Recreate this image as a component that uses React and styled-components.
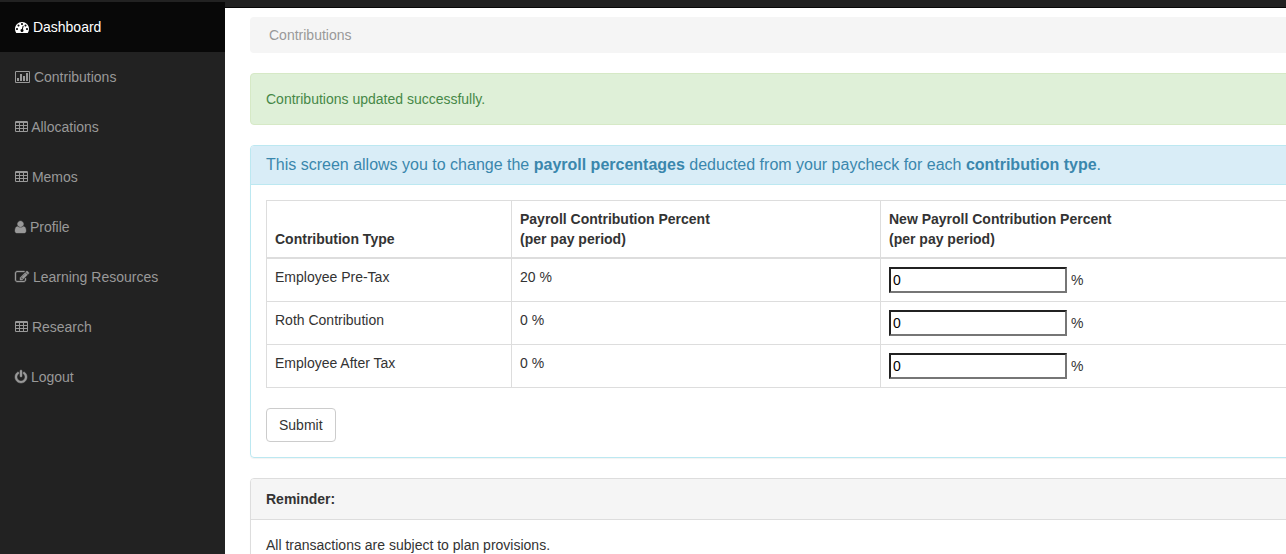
import React from 'react';
import styled, { createGlobalStyle } from 'styled-components';

const GlobalStyle = createGlobalStyle`
  *, *::before, *::after { box-sizing: border-box; }
  html, body { margin: 0; padding: 0; height: 554px; overflow: hidden; }
  body {
    font-family: "Liberation Sans", Arial, sans-serif;
    font-size: 14px;
    line-height: 20px;
    color: #333;
    background: #fff;
  }
`;

const Page = styled.div`
  display: grid;
  grid-template-columns: 225px minmax(0, 1fr);
  height: 554px;
  overflow: hidden;
`;

const Sidebar = styled.nav`
  background: #222;
  padding-top: 2px;
`;

const NavList = styled.ul`
  list-style: none;
  margin: 0;
  padding: 0;
`;

const NavLink = styled.a`
  display: block;
  height: 50px;
  padding: 15px;
  color: ${(p) => (p.$active ? '#fff' : '#999')};
  background: ${(p) => (p.$active ? '#080808' : 'transparent')};
  text-decoration: none;
  white-space: nowrap;
`;

const Glyph = styled.svg`
  height: 14px;
  width: ${(p) => p.$width}px;
  vertical-align: -2px;
  overflow: visible;
  fill: currentColor;
  stroke: currentColor;
  stroke-width: ${(p) => p.$weight || 0};
`;

const Content = styled.div`
  overflow: hidden;
`;

const TopBar = styled.div`
  height: 8px;
  background: #222;
  border-bottom: 1px solid #080808;
`;

const Main = styled.main`
  width: 1150px;
  padding: 9px 25px 0;
`;

const Breadcrumb = styled.div`
  height: 36px;
  padding: 8px 19px;
  margin-bottom: 20px;
  border-radius: 4px;
  background: #f5f5f5;
  color: #999;
`;

const Alert = styled.div`
  padding: 15px;
  margin-bottom: 20px;
  border: 1px solid #d6e9c6;
  border-radius: 4px;
  background: #dff0d8;
  color: #468847;
`;

const Panel = styled.section`
  margin-bottom: 20px;
  border: 1px solid ${(p) => (p.$info ? '#bce8f1' : '#ddd')};
  border-radius: 4px;
  box-shadow: 0 1px 1px rgba(0, 0, 0, 0.05);
`;

const PanelHeading = styled.header`
  padding: 10px 15px;
  border-bottom: 1px solid ${(p) => (p.$info ? '#bce8f1' : '#ddd')};
  border-radius: 3px 3px 0 0;
  background: ${(p) => (p.$info ? '#d9edf7' : '#f5f5f5')};
  color: ${(p) => (p.$info ? '#3a87ad' : '#333')};
`;

const PanelTitle = styled.h3`
  margin: 0;
  font-size: 16px;
  font-weight: 400;
  line-height: 17.6px;
`;

const PanelBody = styled.div`
  padding: 15px;
`;

const Table = styled.table`
  width: 100%;
  margin-bottom: 20px;
  table-layout: fixed;
  border-collapse: collapse;
  border: 1px solid #ddd;
`;

const Column = styled.col`
  width: ${(p) => p.$width || 'auto'};
`;

const HeadCell = styled.th`
  padding: 8px;
  text-align: left;
  vertical-align: bottom;
  border: 1px solid #ddd;
  border-bottom-width: 2px;
`;

const Cell = styled.td`
  padding: 8px;
  vertical-align: top;
  border: 1px solid #ddd;
`;

const PercentInput = styled.input`
  width: 178px;
  height: 26px;
  margin: 0;
  padding: 1px 2px;
  border: 2px solid;
  border-color: #212121 #767676 #767676 #212121;
  background: #fff;
  color: #000;
  font: inherit;
  vertical-align: baseline;
`;

const SubmitButton = styled.button`
  display: block;
  height: 34px;
  padding: 6px 12px;
  border: 1px solid #ccc;
  border-radius: 4px;
  background: #fff;
  color: #333;
  font: inherit;
`;

const dot = 'q0 -53 -37.5 -90.5t-90.5 -37.5t-90.5 37.5t-37.5 90.5t37.5 90.5t90.5 37.5t90.5 -37.5t37.5 -90.5z';
const slot = 'v192q0 14 -9 23t-23 9h-320q-14 0 -23 -9t-9 -23v-192q0 -14 9 -23t23 -9h320q14 0 23 9t9 23z';
const tableSlots = [512, 1024, 1536]
  .map((x) => [160, 544, 928].map((y) => `M${x} ${y}${slot}`).join(''))
  .join('');

// Outlines use a y-up em of 1792 units with the baseline at 0.
const icons = {
  dashboard: {
    units: 1792,
    d: `M384 384${dot}M576 832${dot}M1004 351l101 382q6 26 -7.5 48.5t-38.5 29.5t-48 -6.5t-30 -39.5l-101 -382q-60 -5 -107 -43.5t-63 -98.5q-20 -77 20 -146t117 -89t146 20t89 117q16 60 -6 117t-72 91zM1664 384${dot}M1024 1024${dot}M1472 832${dot}M1792 384q0 -261 -141 -483q-19 -29 -54 -29h-1402q-35 0 -54 29q-141 221 -141 483q0 182 71 348t191 286t286 191t348 71t348 -71t286 -191t191 -286t71 -348z`,
  },
  chart: {
    units: 1920,
    d: 'M512 512v-384h-256v384h256zM896 1024v-896h-256v896h256zM1280 768v-640h-256v640h256zM1664 1152v-1024h-256v1024h256zM1792 32v1216q0 13 -9.5 22.5t-22.5 9.5h-1600q-13 0 -22.5 -9.5t-9.5 -22.5v-1216q0 -13 9.5 -22.5t22.5 -9.5h1600q13 0 22.5 9.5t9.5 22.5zM1920 1248v-1216q0 -66 -47 -113t-113 -47h-1600q-66 0 -113 47t-47 113v1216q0 66 47 113t113 47h1600q66 0 113 -47t47 -113z',
  },
  table: {
    units: 1664,
    d: `${tableSlots}M1664 1248v-1088q0 -66 -47 -113t-113 -47h-1344q-66 0 -113 47t-47 113v1088q0 66 47 113t113 47h1344q66 0 113 -47t47 -113z`,
  },
  user: {
    units: 1408,
    weight: 50,
    d: 'M1408 131q0 -120 -73 -189.5t-194 -69.5h-874q-121 0 -194 69.5t-73 189.5q0 53 3.5 103.5t14 109t26.5 108.5t43 97.5t62 81t85.5 53.5t111.5 20q9 0 42 -21.5t74.5 -48t108 -48t133.5 -21.5t133.5 21.5t108 48t74.5 48t42 21.5q61 0 111.5 -20t85.5 -53.5t62 -81t43 -97.5t26.5 -108.5t14 -109t3.5 -103.5zM1088 1024q0 -159 -112.5 -271.5t-271.5 -112.5t-271.5 112.5t-112.5 271.5t112.5 271.5t271.5 112.5t271.5 -112.5t112.5 -271.5z',
  },
  edit: {
    units: 1792,
    weight: 50,
    d: 'M888 352l116 116l-152 152l-116 -116v-56h96v-96h56zM1328 1072q-16 16 -33 -1l-350 -350q-17 -17 -1 -33t33 1l350 350q17 17 1 33zM1408 478v-190q0 -119 -84.5 -203.5t-203.5 -84.5h-832q-119 0 -203.5 84.5t-84.5 203.5v832q0 119 84.5 203.5t203.5 84.5h832q63 0 117 -25q15 -7 18 -23q3 -17 -9 -29l-49 -49q-14 -14 -32 -8q-23 6 -45 6h-832q-66 0 -113 -47t-47 -113v-832q0 -66 47 -113t113 -47h832q66 0 113 47t47 113v126q0 13 9 22l64 64q15 15 35 7t20 -29zM1312 1216l288 -288l-672 -672h-288v288zM1756 1084l-92 -92l-288 288l92 92q28 28 68 28t68 -28l152 -152q28 -28 28 -68t-28 -68z',
  },
  power: {
    units: 1536,
    weight: 60,
    d: 'M1536 640q0 -156 -61 -298t-164 -245t-245 -164t-298 -61t-298 61t-245 164t-164 245t-61 298q0 182 80.5 343t226.5 270q43 32 95.5 25t83.5 -50q32 -42 24.5 -94.5t-49.5 -84.5q-98 -74 -151.5 -181t-53.5 -228q0 -104 40.5 -198.5t109.5 -163.5t163.5 -109.5t198.5 -40.5t198.5 40.5t163.5 109.5t109.5 163.5t40.5 198.5q0 121 -53.5 228t-151.5 181q-42 32 -49.5 84.5t24.5 94.5q31 43 84 50t95 -25q146 -109 226.5 -270t80.5 -343zM896 1408v-640q0 -52 -38 -90t-90 -38t-90 38t-38 90v640q0 52 38 90t90 38t90 -38t38 -90z',
  },
};

function Icon({ name }) {
  const { units, weight, d } = icons[name];
  return (
    <Glyph $width={units / 128} $weight={weight} viewBox={`0 0 ${units} 1792`} aria-hidden="true">
      <path d={d} fillRule="evenodd" transform="translate(0 1536) scale(1 -1)" />
    </Glyph>
  );
}

const navItems = [
  { icon: 'dashboard', label: 'Dashboard', active: true },
  { icon: 'chart', label: 'Contributions' },
  { icon: 'table', label: 'Allocations' },
  { icon: 'table', label: 'Memos' },
  { icon: 'user', label: 'Profile' },
  { icon: 'edit', label: 'Learning Resources' },
  { icon: 'table', label: 'Research' },
  { icon: 'power', label: 'Logout' },
];

const contributions = [
  { type: 'Employee Pre-Tax', percent: 20 },
  { type: 'Roth Contribution', percent: 0 },
  { type: 'Employee After Tax', percent: 0 },
];

export default function App() {
  return (
    <>
      <GlobalStyle />
      <Page>
        <Sidebar>
          <NavList>
            {navItems.map((item) => (
              <li key={item.label}>
                <NavLink href="#" $active={item.active}>
                  <Icon name={item.icon} /> {item.label}
                </NavLink>
              </li>
            ))}
          </NavList>
        </Sidebar>
        <Content>
          <TopBar />
          <Main>
            <Breadcrumb>Contributions</Breadcrumb>
            <Alert role="status">Contributions updated successfully.</Alert>
            <Panel $info>
              <PanelHeading $info>
                <PanelTitle>
                  This screen allows you to change the <strong>payroll percentages</strong> deducted from your
                  paycheck for each <strong>contribution type</strong>.
                </PanelTitle>
              </PanelHeading>
              <PanelBody>
                <Table>
                  <colgroup>
                    <Column $width="245px" />
                    <Column $width="369px" />
                    <Column />
                  </colgroup>
                  <thead>
                    <tr>
                      <HeadCell>Contribution Type</HeadCell>
                      <HeadCell>
                        Payroll Contribution Percent
                        <br />
                        (per pay period)
                      </HeadCell>
                      <HeadCell>
                        New Payroll Contribution Percent
                        <br />
                        (per pay period)
                      </HeadCell>
                    </tr>
                  </thead>
                  <tbody>
                    {contributions.map((row) => (
                      <tr key={row.type}>
                        <Cell>{row.type}</Cell>
                        <Cell>{row.percent} %</Cell>
                        <Cell>
                          <PercentInput type="text" defaultValue="0" aria-label={row.type} /> %
                        </Cell>
                      </tr>
                    ))}
                  </tbody>
                </Table>
                <SubmitButton type="button">Submit</SubmitButton>
              </PanelBody>
            </Panel>
            <Panel>
              <PanelHeading>
                <strong>Reminder:</strong>
              </PanelHeading>
              <PanelBody>All transactions are subject to plan provisions.</PanelBody>
            </Panel>
          </Main>
        </Content>
      </Page>
    </>
  );
}
